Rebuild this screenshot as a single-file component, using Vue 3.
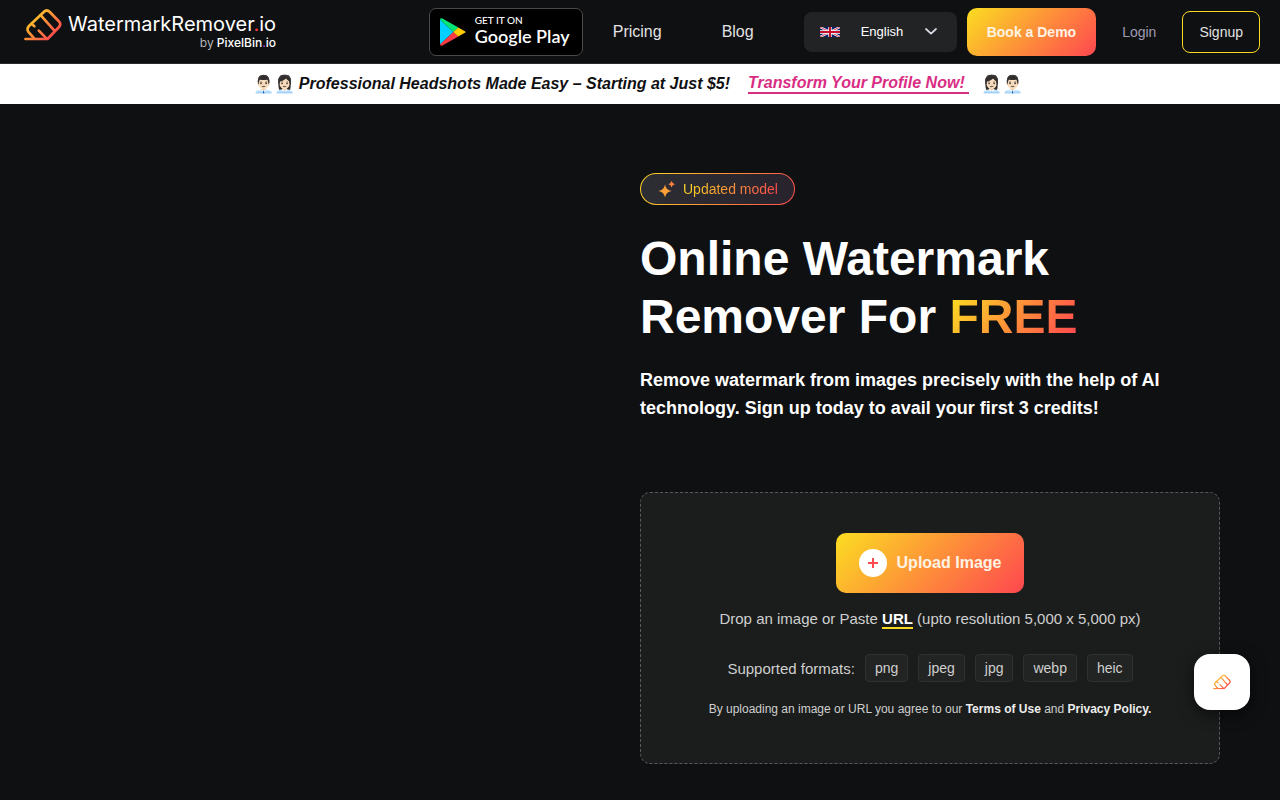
<template>
  <div class="page">
    <svg class="defs" aria-hidden="true">
      <defs>
        <linearGradient id="warm" gradientUnits="userSpaceOnUse" x1="6" y1="4" x2="28" y2="28">
          <stop offset="0" stop-color="#fbd923" />
          <stop offset="1" stop-color="#ff4b4e" />
        </linearGradient>
        <symbol id="eraser" viewBox="0 0 38 32">
          <g fill="none" stroke="url(#warm)" stroke-width="2.7" stroke-linecap="round" stroke-linejoin="round">
            <path d="M1.5 30H23.5L34.8 18.2Q37.6 15.2 34.8 12.2L25.8 3Q22.8 0 19.8 3L5 17Q2.4 19.8 4.4 22.8L10.4 29.6" />
            <path d="M16.6 6.2L30.2 21.4" />
            <path d="M7.4 14.8L10.4 17.2" />
            <path d="M14.8 21.6L22.4 29.4" />
          </g>
        </symbol>
      </defs>
    </svg>

    <header class="header">
      <a class="logo" href="#" aria-label="WatermarkRemover.io by PixelBin.io">
        <svg class="logo-icon"><use href="#eraser" /></svg>
        <span class="logo-text">
          <span class="logo-name">WatermarkRemover<span class="red">.</span>io</span>
          <span class="logo-by"><span class="by">by</span> PixelBin<span class="purple">.</span>io</span>
        </span>
      </a>

      <nav class="nav">
        <a class="play" href="#">
          <svg class="play-icon" viewBox="0 0 26 28">
            <path fill="#00d0ff" d="M0 1.4V26.6L13.4 14Z" />
            <path fill="#00e676" d="M0 1.4Q.4-.4 2.4.6L18.4 9.6L13.4 14Z" />
            <path fill="#ff3a44" d="M0 26.6Q.4 28.4 2.4 27.4L18.4 18.4L13.4 14Z" />
            <path fill="#ffcd00" d="M18.2 9.5L24.9 13.2Q26.3 14 24.9 14.8L18.2 18.5L13.4 14Z" />
          </svg>
          <span class="play-text">
            <small>GET IT ON</small>
            <span>Google Play</span>
          </span>
        </a>
        <a class="nav-link" href="#">Pricing</a>
        <a class="nav-link" href="#">Blog</a>
      </nav>

      <div class="actions">
        <label class="language">
          <svg class="flag" viewBox="0 0 20 10">
            <path fill="#012169" d="M0 0H20V10H0Z" />
            <path stroke="#fff" stroke-width="2.2" d="M0 0L20 10M20 0L0 10" />
            <path stroke="#c8102e" stroke-width="0.8" d="M0 0L20 10M20 0L0 10" />
            <path stroke="#fff" stroke-width="3.4" d="M10 0V10M0 5H20" />
            <path stroke="#c8102e" stroke-width="2" d="M10 0V10M0 5H20" />
          </svg>
          <select v-model="language" aria-label="Language">
            <option v-for="l in languages" :key="l">{{ l }}</option>
          </select>
          <svg class="chevron" viewBox="0 0 12 7">
            <path d="M1 1L6 5.6L11 1" fill="none" stroke="#dadae6" stroke-width="1.7" stroke-linecap="round" stroke-linejoin="round" />
          </svg>
        </label>
        <button class="demo" type="button">Book a Demo</button>
        <a class="login" href="#">Login</a>
        <a class="signup" href="#">Signup</a>
      </div>
    </header>

    <div class="banner">
      <span class="emoji">👨🏻‍💼👩🏻‍💼</span>
      <span>Professional Headshots Made Easy – Starting at Just $5!</span>
      <a href="#">Transform Your Profile Now!&nbsp;</a>
      <span class="emoji">👩🏻‍💼👨🏻‍💼</span>
    </div>

    <main class="hero">
      <div class="preview"></div>
      <section class="content">
        <div class="tag">
          <svg class="sparkle" viewBox="0 0 18 18">
            <path fill="#ff9f38" d="M7 4.4Q8 10 13.6 11Q8 12 7 17.4Q6 12 .4 11Q6 10 7 4.4Z" />
            <path fill="#ff8140" d="M13.6 .8Q14.2 3.6 17 4.2Q14.2 4.8 13.6 7.4Q13 4.8 10.4 4.2Q13 3.6 13.6 .8Z" />
          </svg>
          <span>Updated model</span>
        </div>
        <h1>Online Watermark Remover For <span class="free">FREE</span></h1>
        <h2>Remove watermark from images precisely with the help of AI technology. Sign up today to avail your first 3 credits!</h2>

        <div class="dropzone">
          <button class="upload" type="button">
            <svg viewBox="0 0 28 28">
              <circle cx="14" cy="14" r="14" fill="#fff" />
              <path d="M14 9V19M9 14H19" stroke="#ff4b4e" stroke-width="2" />
            </svg>
            Upload Image
          </button>
          <p class="drop">Drop an image or Paste <a href="#">URL</a> (upto resolution 5,000 x 5,000 px)</p>
          <div class="formats">
            <span class="formats-label">Supported formats:</span>
            <span v-for="f in formats" :key="f" class="format">{{ f }}</span>
          </div>
          <p class="terms">By uploading an image or URL you agree to our <a href="#">Terms of Use</a> and <a href="#">Privacy Policy.</a></p>
        </div>
      </section>
    </main>

    <button class="widget" type="button" aria-label="Open assistant">
      <svg viewBox="0 0 38 32"><use href="#eraser" width="38" height="32" /></svg>
    </button>
  </div>
</template>

<script setup>
import { ref } from 'vue'

const languages = ['English', 'Español', 'Français', 'Deutsch']
const language = ref('English')
const formats = ['png', 'jpeg', 'jpg', 'webp', 'heic']
</script>

<style>
body {
  background: #0f1012;
}
</style>

<style scoped>
.page {
  min-height: 100vh;
  background: #0f1012;
  color: #fff;
  font-family: "Liberation Sans", Arial, sans-serif;
}

.page * {
  box-sizing: border-box;
}

a {
  color: inherit;
  text-decoration: none;
}

button,
select {
  border: 0;
  font-family: inherit;
  cursor: pointer;
}

.defs {
  position: absolute;
  width: 0;
  height: 0;
}

.header {
  display: flex;
  align-items: center;
  height: 64px;
  padding: 0 20px 0 24px;
  border-bottom: 1px solid #2b2c2e;
}

.logo {
  display: flex;
  gap: 6px;
  padding-bottom: 4px;
  font-family: Inter, sans-serif;
}

.logo-icon {
  width: 38px;
  height: 32px;
}

.logo-text {
  display: flex;
  flex-direction: column;
  align-items: flex-end;
  padding-top: 3px;
}

.logo-name {
  font-size: 20px;
  line-height: 24px;
  font-weight: 400;
}

.logo-by {
  font-size: 12px;
  line-height: 14px;
  font-weight: 500;
}

.by {
  font-weight: 400;
  color: #b5b5b8;
}

.red {
  color: #ff3b3b;
}

.purple {
  color: #b43bd6;
}

.nav {
  display: flex;
  align-items: center;
  gap: 60px;
  margin-left: auto;
}

.play {
  display: flex;
  align-items: center;
  gap: 9px;
  width: 154px;
  height: 48px;
  margin-right: -30px;
  padding-left: 10px;
  border: 1px solid #4a4a4c;
  border-radius: 7px;
  background: #000;
}

.play-icon {
  width: 26px;
  height: 28px;
}

.play-text {
  display: flex;
  flex-direction: column;
  padding-bottom: 4px;
  font-family: Lato, sans-serif;
  font-size: 18px;
  line-height: 20px;
  font-weight: 600;
  white-space: nowrap;
}

.play-text small {
  font-size: 10px;
  line-height: 12px;
  font-weight: 500;
}

.nav-link {
  font-size: 16px;
  color: #e2e2e4;
}

.actions {
  display: flex;
  align-items: center;
  margin-left: 50px;
}

.language {
  display: flex;
  align-items: center;
  width: 153px;
  height: 40px;
  padding: 0 20px 0 16px;
  border-radius: 8px;
  background: #222325;
}

.flag {
  width: 20px;
  height: 10px;
}

.language select {
  flex: 1;
  min-width: 0;
  padding: 0 0 0 21px;
  appearance: none;
  background: transparent;
  color: #fff;
  font-size: 13px;
}

.chevron {
  width: 12px;
  height: 7px;
}

.demo {
  height: 48px;
  margin-left: 10px;
  padding: 0 20px;
  border-radius: 10px;
  background: linear-gradient(135deg, #fbd923 3%, #ff4b4e 97%);
  color: #fff3e4;
  font-size: 14px;
  font-weight: 700;
}

.login {
  margin: 0 26px;
  font-size: 14px;
  color: #a09bb5;
}

.signup {
  padding: 0 16px;
  border: 1px solid #fbd923;
  border-radius: 8px;
  font-size: 14px;
  line-height: 40px;
  color: #e2e2e4;
}

.banner {
  display: flex;
  align-items: center;
  justify-content: center;
  height: 40px;
  background: #fff;
  color: #0f1012;
  font-size: 16px;
  font-weight: 700;
  font-style: italic;
}

.banner a {
  margin: 0 12px 0 18px;
  border-bottom: 2px solid #d92d84;
  color: #d92d84;
}

.emoji {
  margin-right: 4px;
  font-size: 17px;
  font-style: normal;
}

.hero {
  display: grid;
  grid-template-columns: 1fr 1fr;
  padding: 69px 60px 36px;
}

.tag {
  display: flex;
  align-items: center;
  gap: 7px;
  width: fit-content;
  height: 32px;
  padding: 0 16px 0 17px;
  border: 1px solid transparent;
  border-radius: 16px;
  background:
    linear-gradient(90deg, #2d2d34, #28232c) padding-box,
    linear-gradient(124deg, #fbd923, #ff4b4e) border-box;
  font-size: 14px;
}

.sparkle {
  width: 18px;
  height: 18px;
}

.tag span,
.free {
  background: linear-gradient(124deg, #fbd923 5%, #ff4b4e 95%);
  background-clip: text;
  color: transparent;
}

h1 {
  margin: 25px 0 0;
  font-size: 48px;
  line-height: 58px;
}

h2 {
  margin: 20px 0 0;
  font-size: 18px;
  line-height: 28px;
}

.dropzone {
  display: flex;
  flex-direction: column;
  align-items: center;
  margin-top: 70px;
  padding: 40px 20px 46px;
  border: 1px dashed #58595a;
  border-radius: 10px;
  background: #1b1d1c;
  color: #cfcfcf;
}

.upload {
  display: flex;
  align-items: center;
  gap: 10px;
  height: 60px;
  padding: 0 23px;
  border-radius: 10px;
  background: linear-gradient(135deg, #fbd923 3%, #ff4b4e 97%);
  color: #fff3e4;
  font-size: 16px;
  font-weight: 700;
}

.upload svg {
  width: 28px;
  height: 28px;
}

.drop {
  margin: 16px 0 0;
  font-size: 15px;
  line-height: 20px;
}

.drop a {
  border-bottom: 2px solid #fbd923;
  color: #fff;
  font-weight: 700;
}

.formats {
  display: flex;
  align-items: center;
  gap: 10px;
  margin-top: 25px;
  font-size: 15px;
}

.format {
  padding: 0 9px;
  border: 1px solid #2f3030;
  border-radius: 4px;
  background: #222423;
  font-size: 14px;
  line-height: 26px;
}

.terms {
  margin: 19px 0 0;
  font-size: 12px;
  line-height: 16px;
}

.terms a {
  color: #ededed;
  font-weight: 700;
}

.widget {
  position: fixed;
  right: 30px;
  bottom: 90px;
  display: flex;
  align-items: center;
  justify-content: center;
  width: 56px;
  height: 56px;
  padding: 0;
  border-radius: 16px;
  background: #fff;
  box-shadow: 0 4px 16px rgba(0, 0, 0, 0.6);
}

.widget svg {
  width: 18px;
  height: 16px;
}
</style>
